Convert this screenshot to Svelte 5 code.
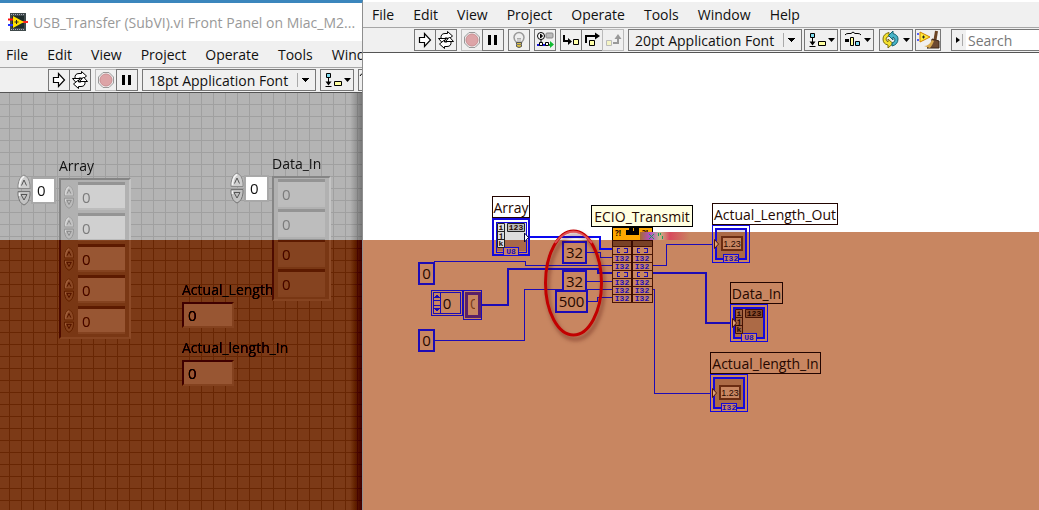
<script>
  const menus = ['File', 'Edit', 'View', 'Project', 'Operate', 'Tools', 'Window', 'Help'];

  const arrays = [
    { name: 'Array', kind: 'control', rows: [0, 0, 0, 0, 0] },
    { name: 'Data_In', kind: 'indicator', rows: [0, 0, 0, 0] },
  ];

  const scalars = [
    { name: 'Actual_Length', kind: 'length-out', value: 0 },
    { name: 'Actual_length_In', kind: 'length-in', value: 0 },
  ];

  const wires = [
    { d: 'M529 237H600V249H612', array: true, bright: true },
    { d: 'M586 252H600V257H612' },
    { d: 'M434 261H525V265H612' },
    { d: 'M481 305H508V269H598V273H612', array: true },
    { d: 'M586 281H612' },
    { d: 'M434 340H524V289H612' },
    { d: 'M587 301H597V297H612' },
    { d: 'M652 265H666V244H713' },
    { d: 'M652 273H706V323H731', array: true },
    { d: 'M652 289H654V393H711' },
  ];

  const constants = [
    { x: 418, y: 262, w: 17, value: '0' },
    { x: 418, y: 329, w: 17, value: '0' },
    { x: 562, y: 241, w: 25, value: '32' },
    { x: 562, y: 270, w: 25, value: '32' },
    { x: 555, y: 290, w: 33, value: '500' },
  ];

  const terminals = [
    { name: 'Array', x: 492, y: 196, w: 38, array: true, input: true, fill: '#fff' },
    { name: 'Actual_Length_Out', x: 712, y: 203, w: 126, fill: '#fff' },
    { name: 'Data_In', x: 730, y: 282, w: 53, array: true, fill: 'none' },
    { name: 'Actual_length_In', x: 710, y: 352, w: 111, fill: 'none' },
  ];

  const ports = ['arr', 'I32', 'I32', 'arr', 'I32', 'I32', 'I32'];
</script>

{#snippet menuBar(items)}
  <nav class="menu">
    {#each items as item}
      <button type="button">{item}</button>
    {/each}
  </nav>
{/snippet}

{#snippet caret()}
  <path d="M23 8h7l-3.5 4z" fill="#000" />
{/snippet}

{#snippet runButtons()}
  <div class="group">
    <button class="tool" type="button" aria-label="Run">
      <svg viewBox="0 0 20 20"><path d="M4.5 7.5h5v-4l6 6.5-6 6.500v-4h-5z" fill="#fff" stroke="#000" stroke-width="1.2" /></svg>
    </button>
    <button class="tool" type="button" aria-label="Run continuously">
      <svg viewBox="0 0 20 20">
        <g fill="#fff" stroke="#000">
          <path d="M5 8.500q-.5-5 4-5h2.500v-2l5 4.500-5 4V8H9.500q-1.500 0-1.500 2z" />
          <path d="M2.500 8.500h8L6.500 13z" />
          <path d="M15 11.500q.5 5-4 5H8.500v2l-5-4.500 5-4v2h2q1.500 0 1.500-2z" />
          <path d="M17.500 11.500h-8L13.500 7z" />
        </g>
      </svg>
    </button>
  </div>
  <div class="group">
    <button class="tool faded" type="button" aria-label="Abort">
      <svg viewBox="0 0 20 20">
        <path d="M7 2.5h6L17.500 7v6L13 17.500H7L2.500 13V7z" fill="#eee" stroke="#999" />
        <circle cx="10" cy="10" r="6" fill="#dda4a7" stroke="#c98e92" />
      </svg>
    </button>
    <button class="tool" type="button" aria-label="Pause">
      <svg viewBox="0 0 20 20"><path d="M5 5h3v10H5zM11 5h3v10h-3z" /></svg>
    </button>
  </div>
{/snippet}

{#snippet alignButton()}
  <button class="tool wide" type="button" aria-label="Align objects">
    <svg viewBox="0 0 32 20">
      <path d="M5.5 3.500h4v4h-4z" fill="#7fdcf0" stroke="#000" />
      <path d="M7.500 8v6M4.500 16.500h6" stroke="#000" />
      <path d="M4.500 11.500h6l-3 4z" />
      <path d="M13.500 11.500h7v4h-7z" fill="#ffffa0" stroke="#000" />
      {@render caret()}
    </svg>
  </button>
{/snippet}

{#snippet spinner()}
  <svg class="spinner" viewBox="0 0 14 32" aria-hidden="true">
    <path d="M1 14.500V11Q2 3 7 1q5 2 6 10v3.500z" fill="#cecece" stroke="#8a8a8a" />
    <path d="M1 17.500V21q1 8 6 10 5-2 6-10v-3.500z" fill="#c2c2c2" stroke="#747474" />
    <path d="M2.500 13V11Q3.500 4 7 2.500M2.500 19v3" fill="none" stroke="#f6f6f6" stroke-width="1.500" />
    <path d="M4.500 11.500 7 6l2.500 5.500" fill="none" stroke="#555" />
    <path d="M4 20.500h6L7 26z" fill="none" stroke="#555" />
  </svg>
{/snippet}

<div class="screen">
  <section class="window panel-window">
    <header>
      <svg class="logo" viewBox="0 0 20 18" aria-hidden="true">
        <path d="M2 0h16v18H2z" fill="#404a4b" />
        <path d="M3 1.500h14M3 16.500h14" stroke="#aab" stroke-dasharray="1 1" />
        <path d="M4 3h12v12H4z" fill="#1e2b2c" />
        <path d="M0 6.500h6" stroke="#f11" stroke-width="2" />
        <path d="M0 12h6" stroke="#23f" stroke-width="2" />
        <path d="M14 9h6" stroke="#f22" stroke-width="2" />
        <path d="M5 3l11 6-11 6z" fill="#ffe100" />
        <path d="M6.500 9h4M8.500 7v4" stroke="#222" />
      </svg>
      <h1>USB_Transfer (SubVI).vi Front Panel on Miac_M2...</h1>
    </header>
    {@render menuBar(menus.slice(0, 7))}
    <div class="toolbar">
      {@render runButtons()}
      <select aria-label="Text settings"><option>18pt Application Font</option></select>
      {@render alignButton()}
      <button class="tool wide" type="button" aria-label="Distribute objects">
        <svg viewBox="0 0 32 20"><path d="M1 6q1-3 4-2" fill="none" stroke="#000" /></svg>
      </button>
    </div>

    <div class="panel">
      {#each scalars as item}
        <label class="scalar {item.kind}">
          {item.name}
          <input class="field" value={item.value} readonly />
        </label>
      {/each}
      {#each arrays as arr}
        <div class="array {arr.kind}">
          <div class="index">
            {@render spinner()}
            <input class="field" value="0" aria-label="{arr.name} index" />
          </div>
          <div class="body">
            <span class="name">{arr.name}</span>
            <div class="frame">
              {#each arr.rows as value, i}
                <div class="cell">
                  {#if arr.kind === 'control'}{@render spinner()}{/if}
                  <input class="field" {value} aria-label="{arr.name} {i}" />
                </div>
              {/each}
            </div>
          </div>
        </div>
      {/each}
      <!-- invert, add, invert again: subtracts the tint from what lies below -->
      <div class="tint invert"></div>
      <div class="tint add"></div>
      <div class="tint invert"></div>
    </div>
  </section>

  <section class="window diagram-window">
    {@render menuBar(menus)}
    <div class="toolbar">
      {@render runButtons()}
      <button class="tool" type="button" aria-label="Highlight execution">
        <svg viewBox="0 0 20 20">
          <path d="M7.500 12.500Q5 10 5 7.500a5 5 0 0 1 10 0q0 2.500-2.500 5z" fill="#eee" stroke="#999" stroke-width="1.500" />
          <path d="M8 8l1 1 1-1 1 1 1-1M9 9v4M11 9v4" fill="none" stroke="#aaa" />
          <path d="M7.500 12.500h5v4q-2.500 2-5 0z" fill="#dfc23f" stroke="#555" />
          <path d="M7 14.500h6" stroke="#777" />
        </svg>
      </button>
      <button class="tool" type="button" aria-label="Retain wire values">
        <svg viewBox="0 0 20 20">
          <circle cx="6" cy="6" r="3.500" fill="#fff" stroke="#000" />
          <path d="M5.500 4v4l2-2zM6 9v5" stroke="#000" />
          <rect x="11" y="3" width="7" height="5" rx="1" fill="#bbb" stroke="#888" />
          <path d="M2 15h9" stroke="#11d" stroke-width="2" />
          <path d="M4.500 12.500h3v3h-3zM10.500 12.500h3v3h-3z" fill="#fff" stroke="#000" />
          <path d="M14 14h1v-3l4 3.500-4 3.500v-2h-1z" fill="#1b3" />
        </svg>
      </button>
      <div class="group">
        <button class="tool" type="button" aria-label="Step into">
          <svg viewBox="0 0 20 20">
            <path d="M3 5v6h5" fill="none" stroke="#000" stroke-width="2" />
            <path d="M7 8l4 3.500-4 3.500z" />
            <path d="M12.500 9.500h5v5h-5z" fill="#ffffa8" stroke="#000" />
          </svg>
        </button>
        <button class="tool" type="button" aria-label="Step over">
          <svg viewBox="0 0 20 20">
            <path d="M4 13V6h10" fill="none" stroke="#000" stroke-width="2" />
            <path d="M13 2.500l5 3.500-5 3.500z" />
            <path d="M7.500 10.500h5v5h-5z" fill="#ffffa8" stroke="#000" />
          </svg>
        </button>
        <button class="tool faded" type="button" aria-label="Step out">
          <svg viewBox="0 0 20 20">
            <path d="M3.500 10.500h5v5h-5z" fill="#f4f4c4" stroke="#bbb" />
            <path d="M10 13h5V8" fill="none" stroke="#999" stroke-width="2" />
            <path d="M11.500 9l3.500-5 3.500 5z" fill="#999" />
          </svg>
        </button>
      </div>
      <div class="group spaced">
        <select aria-label="Text settings"><option>20pt Application Font</option></select>
        {@render alignButton()}
        <button class="tool wide" type="button" aria-label="Distribute objects">
          <svg viewBox="0 0 32 20">
            <path d="M4 5q1-1.500 3-1.500h3L12 2l2 1.500h3q2 0 3 1.500" fill="none" stroke="#000" />
            <path d="M4 9h4v3H4z" />
            <path d="M9.500 7.500h3v8h-3z" fill="#ffff9c" stroke="#000" />
            <path d="M14.500 11.500h4v4h-4z" fill="#7fdcf0" stroke="#000" />
            {@render caret()}
          </svg>
        </button>
        <button class="tool wide gap-left" type="button" aria-label="Reorder">
          <svg viewBox="0 0 32 20">
            <path d="M9 2.500Q3 4 3 9q0 5 5 6v3l5-4.500L8 9v3q-2-1-2-3 0-2 3-3z" fill="#f5e22d" stroke="#7a6d10" />
            <path d="M12 16q6-1.500 6-7 0-4-5-5.500V1L8.500 5.500 13 10V7q2 1 2 3t-3 3z" fill="#47b4c9" stroke="#15606d" />
            {@render caret()}
          </svg>
        </button>
        <button class="tool broom" type="button" aria-label="Clean up diagram">
          <svg viewBox="0 0 24 20">
            <path d="M1 4h5M1 10h5" stroke="#23f" stroke-width="1.500" stroke-dasharray="2 1" />
            <path d="M4 2l10 5-10 5z" fill="#ffeb38" stroke="#d08000" />
            <path d="M6 7h3M7.500 5.500v3" stroke="#222" />
            <path d="M20.500 1l-1.500 9" stroke="#6c4526" stroke-width="3" />
            <path d="M16 9l7 2v7H11q5-2 5-9z" fill="#6d4a31" stroke="#3f2818" />
            <path d="M8 16q5 0 8-6l2 1q-2 5-4 7z" fill="#d8a94e" />
          </svg>
        </button>
      </div>
      <div class="search">
        <button type="button" aria-label="Search scope">
          <svg viewBox="0 0 12 20"><path d="M4 7l4 3-4 3z" /><path d="M10.500 4v12" stroke="#aaa" /></svg>
        </button>
        <input type="search" placeholder="Search" aria-label="Search" />
      </div>
    </div>

    <div class="diagram">
      <svg class="canvas" viewBox="363 53 676 457">
        <defs>
          <linearGradient id="noise">
            <stop offset="0" stop-color="#a56a30" />
            <stop offset="0.2" stop-color="#b04fc8" />
            <stop offset="0.4" stop-color="#c9b88a" />
            <stop offset="0.6" stop-color="#d84a5c" />
            <stop offset="1" stop-color="#c88661" />
          </linearGradient>
          <filter id="shadow" x="-20%" y="-20%" width="150%" height="150%">
            <feDropShadow dx="2" dy="4" stdDeviation="2" flood-color="#400" flood-opacity="0.5" />
          </filter>
        </defs>

        <g class="wires">
          {#each wires as wire}
            <path d={wire.d} class:thick={wire.array} class:bright={wire.bright} />
          {/each}
        </g>

        {#each constants as c}
          <g class="constant">
            <rect x={c.x + 1} y={c.y + 1} width={c.w - 2} height="21" />
            <text x={c.x + c.w / 2} y={c.y + 17}>{c.value}</text>
          </g>
        {/each}

        <g class="array-constant">
          <path d="M431.500 290.500h31v25h-31zM433.500 292.500h27v21h-27zM463.500 290.500h18v29h-18z" />
          <path class="core" d="M466 293h13v23h-13z" />
          <path d="M434 300.500h6M434 305.500h6M440.500 293v20" />
          <path class="solid" d="M437 294l3 4h-6zM437 312l3-4h-6z" />
          <text x="447" y="309">0</text>
          <svg x="468" y="295" width="7" height="19"><text class="cut" x="2" y="14">0</text></svg>
        </g>

        {#each terminals as t}
          <g class="terminal">
            <rect class="label" x={t.x + 0.5} y={t.y + 0.5} width={t.w - 1} height="21" fill={t.fill} />
            <text class="label-text" x={t.x + t.w / 2} y={t.y + 17}>{t.name}</text>
            <svg x={t.x} y={t.y + 22} width="38" height="38">
              {#if t.input}
                <path d="M0 0h38v22H0z" fill="#fff" />
                <path d="M4 4h30v18H4z" fill="#ddd" />
                <path d="M4 22h30v11H4z" fill="#a96848" />
              {:else}
                <path d="M4 4h30v30H4z" fill="#ac6a46" />
              {/if}
              {#if t.name === 'Actual_Length_Out'}
                <path d="M0 0h38v7H0z" fill="#fff" />
                <path d="M4 3h30v4H4z" fill="#dedcec" />
              {/if}
              <rect class="outer" class:heavy={t.input} x={t.input ? 1 : 0.5} y={t.input ? 1 : 0.5} width={t.input ? 36 : 37} height={t.input ? 36 : 37} />
              <path class="inner" class:thin={t.input} d="M11 34H4V4h30v30h-7" />
              <path class="tag" d="M11.500 37v-7.500h15V37" />
              {#if t.array}
                <g class="dark" class:lit={t.input}>
                  <path d="M5.500 5.500h7v24h-7zM5.500 13.500h7M5.500 21.500h7" />
                  <path class="value" d="M15.500 5.500h17v8h-17z" />
                  <text x="9" y="12">i</text>
                  <text x="9" y="20">j</text>
                  <text x="9" y="28">k</text>
                  <text x="24" y="12">123</text>
                </g>
              {:else}
                <g class="dark">
                  <path class="bezel" d="M10 12h20v13H10z" />
                  <text class="decimal" x="20" y="22">1.23</text>
                </g>
              {/if}
              {#if t.input}
                <path d="M32.500 15v9l4-4.500z" fill="#fff" stroke="#003" />
              {:else}
                <path d="M2.500 14.500v9l4-4.500z" fill="#dda27e" stroke="#511405" />
              {/if}
              <text class="type" x="19" y="36">{t.array ? 'U8' : 'I32'}</text>
            </svg>
          </g>
        {/each}

        <g class="subvi">
          <path d="M612 227h40v13h-40z" fill="#fda800" stroke="#000" />
          <text class="marks" x="618" y="236">?!</text>
          <text class="marks" x="645" y="236">?!</text>
          <path d="M626 234v-4h3v-3h3v4h2v-3h4v6z" stroke="#000" />
          <path d="M612 240h40v6h-40z" fill="#794126" stroke="#380a00" />
          <rect x="640" y="232" width="50" height="8" fill="url(#noise)" />
          <path d="M649 234l5 5M654 234l-5 5M658 233v3M662 236v3M660 233v2" stroke="#1d9d5b" />
          {#each ports as port, i}
            {#each [612, 632] as x}
              <rect {x} y={246 + i * 8} width="20" height="8" class="port" />
              {#if port === 'arr'}
                <path class="bracket" d="M{x + 8} {248 + i * 8}h-3v4h3M{x + 12} {248 + i * 8}h3v4h-3" />
              {:else}
                <text class="port-type" x={x + 10} y={253 + i * 8}>I32</text>
              {/if}
            {/each}
          {/each}
          <path d="M632 240v62" stroke="#380a00" stroke-width="2" />
          <rect x="591.5" y="205.5" width="101" height="21" fill="#ffffe1" stroke="#000" />
          <text class="label-text" x="642" y="222">ECIO_Transmit</text>
        </g>

        <ellipse cx="573.5" cy="283" rx="28" ry="52" filter="url(#shadow)" />
        <path class="glint" d="M555 243Q573 220 592 243" />
      </svg>
    </div>
  </section>
</div>

<style>
  :global(body) {
    margin: 0;
    background: #fff;
  }

  .screen {
    display: grid;
    grid-template-columns: 363px minmax(0, 1fr);
    min-height: 100vh;
    overflow: hidden;
    font-family: "Open Sans", "Noto Sans", sans-serif;
    font-size: 14px;
    color: #111;
  }

  .window {
    display: flex;
    flex-direction: column;
    min-width: 0;
    overflow: hidden;
  }

  .panel-window {
    border-top: 3px solid #3b86bd;
    border-right: 1px solid #8e8e8e;
    box-sizing: border-box;
  }

  .diagram-window {
    padding-top: 2px;
  }

  header {
    display: flex;
    align-items: center;
    gap: 5px;
    height: 38px;
    padding-left: 8px;
    background: #fff;
  }

  .logo {
    width: 20px;
    height: 18px;
    flex-shrink: 0;
  }

  h1 {
    margin: 0;
    font-size: 14px;
    font-weight: 400;
    color: #999;
    white-space: nowrap;
  }

  button,
  input,
  select {
    margin: 0;
    padding: 0;
    border: 0;
    border-radius: 0;
    background: none;
    font: inherit;
    color: inherit;
    box-sizing: border-box;
  }

  .menu {
    display: flex;
    align-items: center;
    gap: 19px;
    height: 25px;
    padding-left: 6px;
    background: #f0f0f0;
    border-bottom: 1px solid #a6a6a6;
  }

  .panel-window .menu {
    height: 26px;
  }

  .diagram-window .menu {
    padding-left: 9px;
  }

  .menu button {
    flex-shrink: 0;
  }

  .toolbar {
    display: flex;
    align-items: center;
    gap: 4px;
    height: 24px;
    padding-left: 48px;
    background: #f0f0f0;
    border-bottom: 1px solid #555;
  }

  .diagram-window .toolbar {
    padding-left: 51px;
  }

  .group {
    display: flex;
    flex-shrink: 0;
  }

  .group.spaced {
    gap: 2px;
  }

  .tool {
    width: 22px;
    height: 22px;
    flex-shrink: 0;
    border: 1px solid #777;
  }

  .group:not(.spaced) .tool + .tool {
    margin-left: -1px;
  }

  .tool.faded {
    border-color: #bbb;
  }

  .tool.wide {
    width: 34px;
  }

  .tool.broom {
    width: 26px;
  }

  .tool.gap-left {
    margin-left: 3px;
  }

  .tool svg {
    display: block;
    width: 100%;
    height: 20px;
  }

  select {
    width: 174px;
    height: 22px;
    flex-shrink: 0;
    padding-left: 6px;
    border: 1px solid #777;
    appearance: none;
    background:
      linear-gradient(#aaa, #aaa) right 17px center / 1px 14px no-repeat,
      linear-gradient(#000, #000) right 6px top 8px / 7px 1px no-repeat,
      linear-gradient(#000, #000) right 7px top 9px / 5px 1px no-repeat,
      linear-gradient(#000, #000) right 8px top 10px / 3px 1px no-repeat,
      linear-gradient(#000, #000) right 9px top 11px / 1px 1px no-repeat;
  }

  .search {
    display: flex;
    flex: 1;
    height: 22px;
    margin-left: 6px;
    border: 1px solid #777;
    border-right: 0;
    box-sizing: border-box;
  }

  .search button {
    width: 14px;
  }

  .search svg {
    display: block;
    width: 12px;
    height: 20px;
  }

  .search input {
    flex: 1;
    min-width: 0;
    padding-left: 2px;
    background: #fff;
    appearance: none;
  }

  .search input::placeholder {
    color: #777;
    opacity: 1;
  }

  .panel {
    position: relative;
    flex: 1;
    min-height: 417px;
    isolation: isolate;
    background:
      linear-gradient(90deg, transparent, #0005) right / 12px 100% no-repeat,
      linear-gradient(90deg, #a0a0a0 1px, transparent 1px) 9px 0 / 12px 12px,
      linear-gradient(#a0a0a0 1px, transparent 1px) 0 11px / 12px 12px,
      #b4b4b4;
  }

  .tint {
    position: absolute;
    inset: 147px 0 0;
    pointer-events: none;
  }

  .tint.invert {
    background: #fff;
    mix-blend-mode: difference;
  }

  .tint.add {
    background: #387a9d;
    mix-blend-mode: plus-lighter;
  }

  .array {
    position: absolute;
    display: flex;
    align-items: flex-start;
    gap: 5px;
  }

  .array.control {
    left: 17px;
    top: 63px;
  }

  .array.indicator {
    left: 230px;
    top: 61px;
  }

  .index {
    display: flex;
    align-items: center;
    gap: 2px;
    margin-top: 18px;
  }

  .name {
    display: block;
    height: 22px;
    line-height: 20px;
  }

  .spinner {
    width: 14px;
    height: 32px;
    flex-shrink: 0;
  }

  .field {
    display: block;
    width: 47px;
    height: 23px;
    padding-left: 4px;
    background: #d0d0d0;
    font-size: 15px;
  }

  .index .field {
    width: 21px;
    background: #fff;
    outline: 2px solid #a8a8a8;
  }

  .frame {
    display: flex;
    flex-direction: column;
    gap: 8px;
    width: max-content;
    padding: 5px 4px 5px 2px;
    border: 2px solid;
    border-color: #858585 #c4c4c4 #bebebe #858585;
    background: #b1b1b1;
  }

  .cell {
    display: flex;
    align-items: center;
    gap: 3px;
    height: 23px;
  }

  .cell .field {
    color: #7c7c7c;
    box-shadow: 0 -3px #949494, 0 2px #bcbcbc;
  }

  .cell .spinner {
    width: 12px;
    height: 24px;
    opacity: 0.6;
  }

  .indicator .frame {
    gap: 7px;
    padding: 4px;
  }

  .indicator .cell .field {
    background: #bdbdbd;
  }

  .scalar {
    position: absolute;
    left: 182px;
    display: flex;
    flex-direction: column;
    gap: 2px;
    line-height: 20px;
  }

  .scalar.length-out {
    top: 187px;
  }

  .scalar.length-in {
    top: 245px;
  }

  .scalar .field {
    width: 52px;
    height: 26px;
    border: 2px solid;
    border-color: #777 #bcbcbc #bcbcbc #777;
  }

  .diagram {
    flex: 1;
    overflow: hidden;
    background:
      linear-gradient(#c88661, #c88661) 327px 179px / 100% 8px no-repeat,
      linear-gradient(#c88661, #c88661) 0 187px / 100% 100% no-repeat,
      #fff;
  }

  .canvas {
    display: block;
    width: 676px;
    height: 457px;
  }

  .canvas text {
    fill: #260800;
    text-anchor: middle;
  }

  .wires,
  .constant rect,
  .array-constant path,
  .label,
  .outer,
  .inner,
  .tag,
  .subvi path,
  .port {
    shape-rendering: crispEdges;
  }

  .wires path {
    fill: none;
    stroke: #1c0bb5;
  }

  .wires .thick {
    stroke-width: 2;
  }

  .wires .bright {
    stroke: #0a08f0;
  }

  .constant rect {
    fill: #c88661;
    stroke: #1c0bb5;
    stroke-width: 2;
  }

  .constant text,
  .array-constant text {
    font-size: 15px;
  }

  .array-constant path {
    fill: none;
    stroke: #1c0bb5;
  }

  .array-constant .core {
    fill: #c88661;
    stroke: #5a2068;
    stroke-width: 3;
  }

  .array-constant .solid {
    fill: #1c0bb5;
    stroke: none;
  }

  .canvas .cut {
    fill: #7a3d1d;
    text-anchor: start;
  }

  .label {
    stroke: #220400;
  }

  .outer,
  .inner {
    fill: none;
    stroke: #1408dd;
  }

  .inner,
  .heavy {
    stroke-width: 2;
  }

  .inner.thin {
    stroke-width: 1;
  }

  .tag {
    fill: #c88661;
    stroke: #1408dd;
  }

  .canvas .type,
  .canvas .port-type {
    fill: #1c0bb5;
    font-family: "Liberation Mono", monospace;
    font-size: 8px;
    font-weight: 700;
  }

  .dark path {
    fill: #a06040;
    stroke: #451204;
  }

  .dark text {
    font-family: "Liberation Mono", monospace;
    font-size: 8px;
    font-weight: 700;
  }

  .dark .value {
    fill: #8b4d2e;
  }

  .lit path {
    fill: #ddd;
    stroke: #222;
  }

  .lit .value {
    fill: #bbb;
  }

  .dark .bezel {
    fill: #c88661;
    stroke: #6b2c12;
    stroke-width: 2;
  }

  .dark .decimal {
    font-family: "Liberation Sans", sans-serif;
    font-size: 9px;
    font-weight: 400;
  }

  .port {
    fill: #c88661;
    stroke: #4a1503;
  }

  .bracket {
    fill: none;
    stroke: #1c0bb5;
  }

  .canvas .marks {
    font-size: 8px;
    font-weight: 700;
  }

  ellipse {
    fill: none;
    stroke: #c20000;
    stroke-width: 3;
  }

  .glint {
    fill: none;
    stroke: #f3838a;
    stroke-width: 2;
    opacity: 0.6;
  }
</style>
